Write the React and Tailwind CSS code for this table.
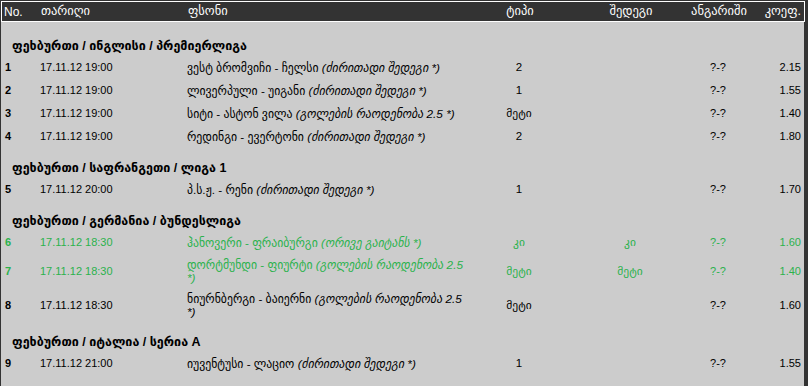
import React from "react";

const sections = [
  {
    title: "ფეხბურთი / ინგლისი / პრემიერლიგა",
    rows: [
      { n: 1, d: "17.11.12 19:00", m: "ვესტ ბრომვიჩი - ჩელსი", t: "ძირითადი შედეგი *)", type: "2", res: "", k: "2.15" },
      { n: 2, d: "17.11.12 19:00", m: "ლივერპული - უიგანი", t: "ძირითადი შედეგი *)", type: "1", res: "", k: "1.55" },
      { n: 3, d: "17.11.12 19:00", m: "სიტი - ასტონ ვილა", t: "გოლების რაოდენობა 2.5 *)", type: "მეტი", res: "", k: "1.40" },
      { n: 4, d: "17.11.12 19:00", m: "რედინგი - ევერტონი", t: "ძირითადი შედეგი *)", type: "2", res: "", k: "1.80" },
    ],
  },
  {
    title: "ფეხბურთი / საფრანგეთი / ლიგა 1",
    rows: [{ n: 5, d: "17.11.12 20:00", m: "პ.ს.ჟ. - რენი", t: "ძირითადი შედეგი *)", type: "1", res: "", k: "1.70" }],
  },
  {
    title: "ფეხბურთი / გერმანია / ბუნდესლიგა",
    rows: [
      { n: 6, d: "17.11.12 18:30", m: "ჰანოვერი - ფრაიბურგი", t: "ორივე გაიტანს *)", type: "კი", res: "კი", k: "1.60", green: true },
      { n: 7, d: "17.11.12 18:30", m: "დორტმუნდი - ფიურტი", t: "გოლების რაოდენობა 2.5", t2: "*)", type: "მეტი", res: "მეტი", k: "1.40", green: true },
      { n: 8, d: "17.11.12 18:30", m: "ნიურნბერგი - ბაიერნი", t: "გოლების რაოდენობა 2.5", t2: "*)", type: "მეტი", res: "", k: "1.60" },
    ],
  },
  {
    title: "ფეხბურთი / იტალია / სერია A",
    rows: [{ n: 9, d: "17.11.12 21:00", m: "იუვენტუსი - ლაციო", t: "ძირითადი შედეგი *)", type: "1", res: "", k: "1.55" }],
  },
];

const grid = "grid grid-cols-[39px_147px_290px_84px_138px_38px_1fr]";

function Row({ r }) {
  const color = r.green ? "text-[#2bb24c]" : "text-black";
  return (
    <div className={`${grid} ${color} items-center ${r.t2 ? "h-[34px]" : "h-[23px]"} text-[11px] leading-[13px]`}>
      <div className="pl-[4px] font-bold">{r.n}</div>
      <div>{r.d}</div>
      <div className="pr-[4px] text-[11.75px] leading-[13px]">
        {r.m} <span className="italic">({r.t}</span>
        {r.t2 && (
          <>
            <br />
            <span className="italic">{r.t2}</span>
          </>
        )}
      </div>
      <div className="flex justify-center text-[11.5px]">{r.type}</div>
      <div className="flex justify-center text-[11.5px]">{r.res}</div>
      <div className="flex justify-center">?-?</div>
      <div className="text-right pr-[3px]">{r.k}</div>
    </div>
  );
}

export default function App() {
  return (
    <div
      className="min-h-[386px] bg-[#333333] pt-[1px] pl-[1px] flex"
      style={{ fontFamily: '"Liberation Sans", "DejaVu Sans", Arial, sans-serif' }}
    >
      <div className="w-[804px] flex flex-col">
        <div className={`${grid} h-[21px] items-center border border-white bg-[#333333] text-white text-[12.5px]`}>
          <div className="pl-[2px] text-[12px]">No.</div>
          <div>თარიღი</div>
          <div>ფსონი</div>
          <div className="flex justify-center">ტიპი</div>
          <div className="flex justify-center">შედეგი</div>
          <div className="flex justify-center whitespace-nowrap">ანგარიში</div>
          <div className="text-right pr-[3px]">კოეფ.</div>
        </div>
        <div className="flex-1 bg-[#cccccc] pt-[4px] mr-[1px]">
          {sections.map((s) => (
            <div key={s.title} className="pt-[10px]">
              <div className="h-[20px] flex items-center pl-[11px] font-bold text-[12.5px] text-black">{s.title}</div>
              {s.rows.map((r) => (
                <Row key={r.n} r={r} />
              ))}
            </div>
          ))}
        </div>
      </div>
    </div>
  );
}
